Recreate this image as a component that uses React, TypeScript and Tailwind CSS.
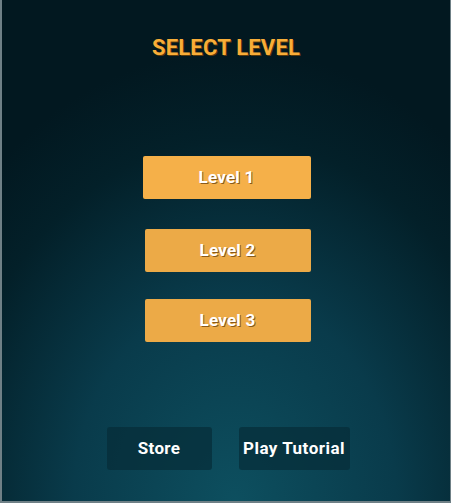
export default function App() {
  const levels = ["Level 1", "Level 2", "Level 3"];

  return (
    <div
      className="h-[503px] w-[451px] overflow-hidden border-b-2 border-l-2 border-r border-[#6f8086] bg-[radial-gradient(ellipse_80%_90%_at_52%_100%,#0d4f5f_0%,#093b4b_45%,#032029_80%,#021820_100%)]"
      style={{ fontFamily: "Roboto, 'Liberation Sans', sans-serif" }}
    >
      <div className="flex flex-col items-center">
        <h1 className="mt-[36px] text-[22px] font-bold leading-[24px] tracking-[0.2px] text-[#f8ad38] [text-shadow:1px_1px_0_#5b3a0c]">
          SELECT LEVEL
        </h1>

        <div className="mt-[96px] flex flex-col items-center">
          {levels.map((label, i) => (
            <button
              key={label}
              className={
                i === 0
                  ? "ml-[1px] h-[43px] w-[168px] rounded-[2px] bg-[#f5b049] text-[17px] font-bold tracking-[0.2px] text-white [text-shadow:1px_1px_0_#8a5a1a]"
                  : i === 1
                    ? "mt-[30px] ml-[3px] h-[43px] w-[166px] rounded-[2px] bg-[#ecaa47] text-[17px] font-bold tracking-[0.2px] text-white [text-shadow:1px_1px_0_#8a5a1a]"
                    : "mt-[27px] ml-[3px] h-[43px] w-[166px] rounded-[2px] bg-[#ecaa47] text-[17px] font-bold tracking-[0.2px] text-white [text-shadow:1px_1px_0_#8a5a1a]"
              }
            >
              {label}
            </button>
          ))}
        </div>

        <div className="mt-[85px] ml-[4px] flex gap-[27px]">
          <button className="h-[43px] w-[105px] rounded-[3px] bg-[#062c37]/70 text-[17px] font-bold tracking-[0.3px] text-white">
            Store
          </button>
          <button className="h-[43px] w-[111px] rounded-[3px] bg-[#062c37]/70 text-[17px] font-bold tracking-[0.5px] text-white">
            Play Tutorial
          </button>
        </div>
      </div>
    </div>
  );
}
